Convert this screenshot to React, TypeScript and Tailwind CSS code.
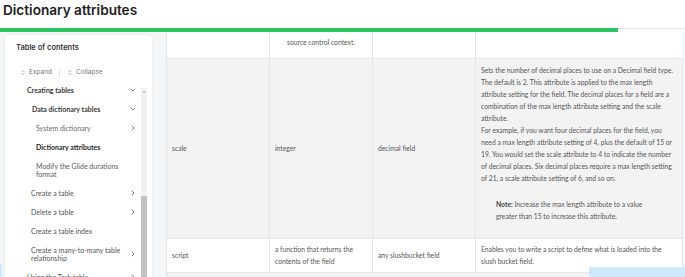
import { ChevronsDownUp, ChevronsUpDown } from "lucide-react";

type TocItem = {
  lines: string[];
  indent: string;
  tone: string;
  icon?: "down" | "right";
};

const tocItems: TocItem[] = [
  { lines: ["Creating tables"], indent: "pl-[22px]", tone: "font-bold text-[#3a3a3a]", icon: "down" },
  { lines: ["Data dictionary tables"], indent: "pl-[27px]", tone: "font-bold text-[#3a3a3a]", icon: "down" },
  { lines: ["System dictionary"], indent: "pl-[31px]", tone: "text-[#6b6b6b]", icon: "right" },
  { lines: ["Dictionary attributes"], indent: "pl-[31px]", tone: "font-bold text-[#2a2a2a]" },
  { lines: ["Modify the Glide durations", "format"], indent: "pl-[31px]", tone: "text-[#5a5a5a]" },
  { lines: ["Create a table"], indent: "pl-[26px]", tone: "text-[#555]", icon: "right" },
  { lines: ["Delete a table"], indent: "pl-[26px]", tone: "text-[#555]", icon: "right" },
  { lines: ["Create a table index"], indent: "pl-[26px]", tone: "text-[#555]" },
  { lines: ["Create a many-to-many table", "relationship"], indent: "pl-[26px]", tone: "text-[#555]", icon: "right" },
  { lines: ["Using the Task table"], indent: "pl-[22px]", tone: "text-[#555]", icon: "right" },
];

function Chevron({ dir }: { dir: "down" | "right" }) {
  if (dir === "down") {
    return (
      <svg width="6" height="4" viewBox="0 0 6 4">
        <path d="M0.8 0.8 L3 3 L5.2 0.8" fill="none" stroke="#666" strokeWidth="0.8" />
      </svg>
    );
  }
  return (
    <svg width="4" height="6" viewBox="0 0 4 6">
      <path d="M0.8 0.8 L3 3 L0.8 5.2" fill="none" stroke="#555" strokeWidth="0.8" />
    </svg>
  );
}

function Sidebar() {
  return (
    <div className="w-[166px] shrink-0 pl-[5px] pt-[3px]">
      <div className="h-[260px] w-[147px] rounded-[4px] bg-white shadow-[0_0_3px_rgba(0,0,0,0.08)]">
        <div className="pl-[11px] pt-[8px] font-['Inter',sans-serif] text-[7.5px] leading-[10px] font-semibold text-[#333]">
          Table of contents
        </div>
        <div className="mt-[16px] flex h-[8px] items-center pl-[15px] font-['Inter',sans-serif] text-[6.5px] text-[#777]">
          <ChevronsUpDown className="h-[7px] w-[6px]" strokeWidth={2} />
          <span className="ml-[3px]">Expand</span>
          <span className="ml-[7px] h-[8px] w-px bg-[#e2e2e2]" />
          <ChevronsDownUp className="ml-[7px] h-[7px] w-[6px]" strokeWidth={2} />
          <span className="ml-[3px]">Collapse</span>
        </div>
        <div className="mt-[4px] flex">
          <div className="w-[136px] font-['Lato',sans-serif] text-[7px] leading-[8px]">
            {tocItems.map((item) => (
              <div key={item.lines[0]} className={`flex items-center py-[5.5px] ${item.indent}`}>
                <div className={`flex-1 ${item.tone}`}>
                  {item.lines.map((l) => (
                    <div key={l}>{l}</div>
                  ))}
                </div>
                <div className="flex w-[16px] justify-center">{item.icon && <Chevron dir={item.icon} />}</div>
              </div>
            ))}
          </div>
          <div className="mt-[7px] flex h-[200px] w-[6px] flex-col bg-[#f1f1f1]">
            <div className="flex h-[9px] items-center justify-center text-[3.5px] text-[#9a9a9a]">▲</div>
            <div className="mt-[99px] flex-1 bg-[#c1c1c1]" />
          </div>
        </div>
      </div>
    </div>
  );
}

const cell = "border-r border-[#e6e6e6] px-[5px]";

function Table() {
  return (
    <div className="w-[516px] border-l border-[#e6e6e6] font-['Lato',sans-serif] text-[6.75px] leading-[12px] text-[#555]">
      {/* row cut off at the top */}
      <div className="grid h-[27px] grid-cols-[103px_103px_103px_207px] overflow-hidden border-b border-[#e6e6e6] bg-white">
        <div className={cell} />
        <div className={`${cell} -mt-[9.5px] text-center`}>
          <div className="mb-[2px]">is changed by the system in a</div>
          <div>source control context.</div>
        </div>
        <div className={cell} />
        <div className={cell} />
      </div>

      <div className="grid h-[180px] grid-cols-[103px_103px_103px_207px] border-b border-[#e6e6e6] bg-[#f3f3f3]">
        <div className={`${cell} flex items-center`}>scale</div>
        <div className={`${cell} flex items-center`}>integer</div>
        <div className={`${cell} flex items-center`}>decimal field</div>
        <div className={`${cell} pt-[5px]`}>
          <div>
            Sets the number of decimal places to use on a Decimal field type. The default is 2. This attribute is
            applied to the max length attribute setting for the field. The decimal places for a field are a
            combination of the max length attribute setting and the scale attribute.
          </div>
          <div>
            For example, if you want four decimal places for the field, you need a max length attribute setting of 4,
            plus the default of 15 or 19. You would set the scale attribute to 4 to indicate the number of decimal
            places. Six decimal places require a max length setting of 21, a scale attribute setting of 6, and so on.
          </div>
          <div className="mt-[14px] pl-[15px] pr-[20px]">
            <span className="font-bold text-[#444]">Note:</span> Increase the max length attribute to a value greater
            than 15 to increase this attribute.
          </div>
        </div>
      </div>

      <div className="grid h-[34px] grid-cols-[103px_103px_103px_207px] border-b border-[#e6e6e6] bg-white">
        <div className={`${cell} flex items-center`}>script</div>
        <div className={`${cell} flex items-center`}>a function that returns the contents of the field</div>
        <div className={`${cell} flex items-center`}>any slushbucket field</div>
        <div className={`${cell} pt-[4px]`}>
          Enables you to write a script to define what is loaded into the slush bucket field.
        </div>
      </div>
      <div className="h-[20px] bg-[#f3f3f3]" />
    </div>
  );
}

export default function App() {
  return (
    <div className="relative h-[277px] w-[685px] overflow-hidden bg-[#f5f6f8]">
      <div className="h-[27.5px] bg-white pl-[3px] font-['Inter',sans-serif] text-[13.6px] leading-[20px] font-semibold text-[#1e1e1e]">
        Dictionary attributes
      </div>
      <div className="flex h-[4px] bg-white">
        <div className="w-[618px] bg-[#2cc25f]" />
        <div className="flex-1">
          <div className="h-[1.5px] bg-[#e4e4e4]" />
        </div>
      </div>
      <div className="flex">
        <Sidebar />
        <Table />
      </div>
      <div className="absolute bottom-0 right-0 h-[10px] w-[96px] bg-[#cfe8fb]" />
      <div className="absolute bottom-0 left-0 h-[13px] w-[2px] bg-[#cfe8fb]" />
    </div>
  );
}
